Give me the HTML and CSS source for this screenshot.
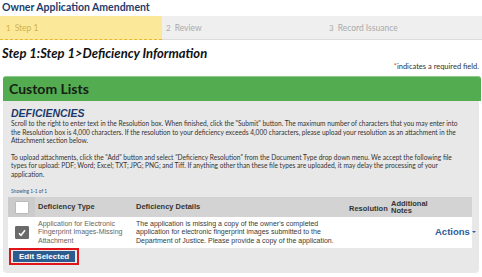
FILE: index.html
```html
<!DOCTYPE html>
<html lang="en">
<head>
    <meta charset="UTF-8">
    <title>Owner Application Amendment</title>
    <link rel="stylesheet" href="styles.css">
</head>
<body>
    <div class="page-title">Owner Application Amendment</div>
    <div class="steps">
        <div class="step active"><span class="num">1</span>Step 1</div>
        <div class="step"><span class="num">2</span>Review</div>
        <div class="step"><span class="num">3</span>Record Issuance</div>
    </div>
    <h2 class="step-heading">Step 1:Step 1&gt;Deficiency Information</h2>
    <div class="required-note"><span class="star">*</span>indicates a required field.</div>

    <div class="section">
        <div class="section-head">Custom Lists</div>
        <div class="section-body">
            <h3 class="list-title">DEFICIENCIES</h3>
            <p class="instructions">Scroll to the right to enter text in the Resolution box. When finished, click the "Submit" button. The maximum number of characters that you may enter into<br>the Resolution box is 4,000 characters. If the resolution to your deficiency exceeds 4,000 characters, please upload your resolution as an attachment in the<br>Attachment section below.</p>
            <p class="instructions">To upload attachments, click the "Add" button and select "Deficiency Resolution" from the Document Type drop down menu. We accept the following file<br>types for upload: PDF; Word; Excel; TXT; JPG; PNG; and Tiff. If anything other than these file types are uploaded, it may delay the processing of your<br>application.</p>
            <div class="showing">Showing 1-1 of 1</div>
            <table class="grid">
                <thead>
                    <tr>
                        <th class="col-check"><span class="box"></span></th>
                        <th class="col-type">Deficiency Type</th>
                        <th class="col-details">Deficiency Details</th>
                        <th class="col-res">Resolution</th>
                        <th class="col-notes">Additional Notes</th>
                        <th class="col-actions"></th>
                    </tr>
                </thead>
                <tbody>
                    <tr>
                        <td class="col-check"><span class="box checked">
                            <svg width="8" height="8" viewBox="0 0 8 8"><path d="M1 4.2 L3 6.3 L7 1.2" fill="none" stroke="#fff" stroke-width="1.5"/></svg>
                        </span></td>
                        <td class="col-type">Application for Electronic Fingerprint Images-Missing Attachment</td>
                        <td class="col-details">The application is missing a copy of the owner's completed application for electronic fingerprint images submitted to the Department of Justice. Please provide a copy of the application.</td>
                        <td class="col-res"></td>
                        <td class="col-notes"></td>
                        <td class="col-actions"><span class="actions">Actions<span class="caret"></span></span></td>
                    </tr>
                </tbody>
            </table>
            <div class="edit-wrap"><button class="edit-btn">Edit Selected</button></div>
        </div>
    </div>
</body>
</html>
```

FILE: styles.css
```css
body {
    margin: 0;
    font-family: Lato, "Liberation Sans", sans-serif;
    background-color: #fff;
    color: #222;
}
.page-title {
    padding: 1px 2px 0;
    height: 15px;
    font-size: 10.5px;
    font-weight: bold;
    color: #1c3b6c;
}
.steps {
    display: flex;
    height: 23px;
    background-color: #efefef;
    border-bottom: 1px solid #dcdcdc;
}
.step {
    display: flex;
    align-items: center;
    font-size: 8.5px;
    color: #aaa;
}
.step:nth-child(1) {
    width: 162px;
}
.step:nth-child(2) {
    width: 159px;
    padding-left: 4px;
}
.step:nth-child(3) {
    padding-left: 4px;
}
.step.active {
    background-color: #fbe898;
    border-bottom: 1px dashed #e6b82a;
    margin-bottom: -1px;
    color: #d1b24c;
    padding-left: 6px;
    box-sizing: border-box;
}
.num {
    margin-right: 4px;
    font-size: 8px;
}
.step-heading {
    margin: 5px 0 0 2px;
    font-size: 13px;
    font-style: italic;
    font-weight: bold;
    color: #111;
    line-height: 16px;
}
.required-note {
    text-align: right;
    padding-right: 3px;
    margin-top: 1px;
    font-size: 7.5px;
    color: #333;
}
.star {
    color: #e0522a;
}
.section {
    margin: 5px 1px 0 3px;
}
.section-head {
    height: 24px;
    line-height: 24px;
    padding-left: 6px;
    background-color: #53ac50;
    border-top: 1px solid #8dc98a;
    border-radius: 3px 3px 0 0;
    font-size: 14px;
    font-weight: bold;
    color: #162016;
}
.section-body {
    background-color: #e8e8e8;
    margin-right: 2px;
    padding: 6px 7px 8px 5px;
    border-radius: 0 0 4px 4px;
}
.list-title {
    margin: 0 0 0 3px;
    font-family: "Liberation Sans", Arial, sans-serif;
    font-size: 10.5px;
    font-style: italic;
    font-weight: bold;
    color: #1c3b6c;
    line-height: 12px;
}
.instructions {
    margin: 0 0 8px 3px;
    font-size: 6.6px;
    line-height: 8.5px;
    color: #333;
    white-space: nowrap;
}
.showing {
    margin: 10px 0 3px 3px;
    font-size: 4.8px;
    color: #2d4f80;
}
.grid {
    width: 464px;
    table-layout: fixed;
    border-collapse: collapse;
    font-family: "Liberation Sans", Arial, sans-serif;
}
.grid th,
.grid td {
    box-sizing: border-box;
}
.grid th {
    background-color: #d3d3d3;
    height: 20px;
    text-align: left;
    font-size: 7.5px;
    font-weight: bold;
    color: #333;
    padding: 0 3px;
    line-height: 7.5px;
}
.grid td {
    background-color: #fff;
    height: 31px;
    vertical-align: middle;
    font-size: 7px;
    line-height: 8.2px;
    color: #666;
    padding: 0 2px 0 3px;
}
.grid th.col-check {
    background-color: #cbcbcb;
}
.col-check {
    width: 27px;
}
.grid .col-check {
    text-align: center;
    padding: 0;
}
.col-type {
    width: 98px;
}
.col-details {
    width: 213px;
}
.grid td.col-details {
    color: #3a3a3a;
}
.col-res {
    width: 42px;
}
.grid th.col-res {
    padding-top: 4px;
}
.col-notes {
    width: 44px;
}
.box {
    display: inline-flex;
    align-items: center;
    justify-content: center;
    width: 12px;
    height: 11px;
    background-color: #fff;
    border: 1px solid #bbb;
    border-radius: 1px;
    vertical-align: middle;
}
.box.checked {
    background-color: #6a6a6a;
    border-color: #6a6a6a;
}
.actions {
    white-space: nowrap;
    font-size: 9.5px;
    font-weight: bold;
    color: #2e5b9a;
}
.caret {
    display: inline-block;
    margin-left: 2px;
    border-left: 2px solid transparent;
    border-right: 2px solid transparent;
    border-top: 2px solid #2e5b9a;
    vertical-align: middle;
}
.edit-wrap {
    width: fit-content;
    margin-left: 1px;
    border: 2px solid #e0141b;
    padding: 1px 2px;
}
.edit-btn {
    display: block;
    background-color: #2c5b8f;
    color: #fff;
    border: none;
    padding: 1px 6px;
    font-family: "Liberation Sans", Arial, sans-serif;
    font-size: 8px;
    font-weight: bold;
    cursor: pointer;
}
```
